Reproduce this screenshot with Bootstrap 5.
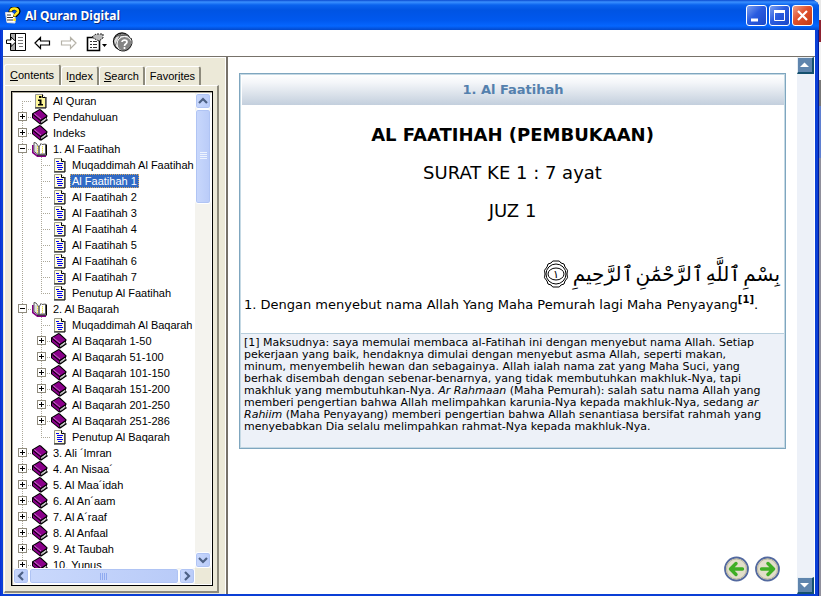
<!DOCTYPE html>
<html lang="id">
<head>
<meta charset="utf-8">
<meta name="viewport" content="width=device-width, initial-scale=1">
<title>Al Quran Digital</title>
<link href="https://cdn.jsdelivr.net/npm/bootstrap@5.3.0/dist/css/bootstrap.min.css" rel="stylesheet">
<style>
body{font:11px/16px "Liberation Sans",Arial,sans-serif;color:#000;background:linear-gradient(#e8e8e8 0 20px,#8c2030 20px 42px,#f2f2f2 42px 80px,#777 80px 106px,#5f7fd0 106px 158px,#90909c 158px)}
a{color:inherit;text-decoration:none}
button{padding:0;border:0;background:none;line-height:0}
button svg{display:block}
.app-window{margin-right:2px;background:#0a3fd6;padding:0 4px 2px 3px;border-radius:0 8px 0 0;box-shadow:inset -1px 0 #001c9c,inset 1px 0 #0831d9}
.title-bar{height:30px;margin:0 -4px 0 -3px;padding:2px 6px 0 4px;border-radius:0 7px 0 0;background:linear-gradient(#0a4ad0 0,#3a90ff 2px,#0a63ee 5px,#0054e3 10px,#0058ee 20px,#0566ff 26px,#0249cc 30px)}
.title-text{font:bold 12px/16px "Noto Sans","Open Sans",sans-serif;color:#fff;text-shadow:1px 1px #0a2a80}
.win-btn{width:21px;height:21px;border:1px solid #fff;border-radius:3px;background:linear-gradient(135deg,#7b9ff0,#2a5ce0 45%,#1b48c8)}
.win-close{background:linear-gradient(135deg,#f0a088,#e0502c 45%,#c43a14)}
.tool-bar{height:27px;padding-left:3px;border-bottom:1px solid #77726a}
.side-pane{width:222px;background:#ece9d8;padding:6px 0 1px 1px;border-top:1px solid #fff}
.tab-strip button{height:19px;font:11px/18px "Liberation Sans",Arial,sans-serif;padding:0 4px;border:1px solid #fff;border-right:2px solid #8d8a7c;border-bottom:0;border-radius:3px 3px 0 0}
.tab-strip button.active{height:21px;padding:0 5px;background:#ece9d8}
.tab-page{margin-right:6px;border:1px solid #fff;border-right:2px solid #8d8a7c;border-bottom:2px solid #8d8a7c;padding:5px 4px 5px 6px}
.tree-frame{min-width:0;border:1px solid #000;background:#fff;box-shadow:inset 1px 1px #aca899;padding:1px}
.tree-row{height:16px;white-space:nowrap}
.tree-row a{padding:0 2px;line-height:14px;margin-left:3px}
.tree-row a.chosen{background:#316ac5;color:#fff;outline:1px dotted #d8a860;outline-offset:-1px}
.guide{width:19px;height:16px;flex:none;background-repeat:no-repeat;--dots:repeating-linear-gradient(#aca899 0 1px,transparent 1px 2px);--dash:repeating-linear-gradient(90deg,#aca899 0 1px,transparent 1px 2px)}
.g-v{background-image:var(--dots);background-size:1px 16px;background-position:9px 0}
.g-t{background-image:var(--dots),var(--dash);background-size:1px 16px,10px 1px;background-position:9px 0,9px 8px}
.g-first{background-size:1px 8px,10px 1px;background-position:9px 8px,9px 8px}
.g-last{background-size:1px 8px,10px 1px}
.toggle{width:9px;height:9px;margin-right:1px;border:1px solid #8f8b7d;background:linear-gradient(#000,#000) center/5px 1px no-repeat #fff}
.toggle.plus{background:linear-gradient(#000,#000) center/5px 1px no-repeat,linear-gradient(#000,#000) center/1px 5px no-repeat #fff}
.ico{width:16px;height:16px;flex:none}
.scroll-v{width:16px;background:#f4f3ee}
.scroll-h{height:16px;background:#f4f3ee}
.xp-part{border:1px solid #fff;border-radius:3px;background:linear-gradient(90deg,#c9d8fc,#b9cbf8);box-shadow:inset 0 0 0 1px #b0c4f4}
.xp-arrow{width:16px;height:16px}
.xp-thumb-v{height:95px}
.splitter{width:3px;background:#fff;border-right:2px solid #77726a}
.doc-pane{padding:16px 11px 12px 11px}
.surah{border:1px solid #7fa6bf;box-shadow:inset 0 0 0 1px #c5d9e4}
.surah-head{height:30px;margin:1px 1px 0 2px;background:linear-gradient(#fff,#f4f6f9 25%,#c3cfdd);color:#5480ad;font:bold 13px/30px "DejaVu Sans",Verdana,sans-serif}
.verdana{font-family:"DejaVu Sans",Verdana,sans-serif}
.surah h1{font-size:18px;font-weight:bold;line-height:20px;margin:20px 0 0}
.surah-sub{font-size:18px;line-height:20px;margin:18px 0 0}
.arabic{font-family:"DejaVu Sans",sans-serif;font-size:20px;line-height:40px;margin:33px 5px 0}
.medal{width:26px;height:30px}
.verse{font-size:13px;line-height:16px;padding:3px 4px 20px;margin:0}
.verse sup{font-size:10px;font-weight:bold;top:-6px}
.note{font-size:11px;line-height:12px;background:#edf1f8;border-top:1px solid #b9cfdd;margin:0 1px 1px;padding:3px 3px 14px}
.page-scroll{width:17px;margin-right:1px;background:#edf1f8}
.page-scroll button{width:17px;height:17px;background:#5f85ad;border:2px solid;border-width:1px 2px 2px 1px;border-color:#e4ecf4 #14506e #14506e #e4ecf4}
.page-nav{gap:6px;margin-right:6px}
</style>
<script src="https://cdn.jsdelivr.net/npm/bootstrap@5.3.0/dist/js/bootstrap.bundle.min.js"></script>
</head>
<body class="vh-100 overflow-hidden">
<svg width="0" height="0" class="position-absolute" aria-hidden="true">
<symbol id="book" viewBox="0 0 16 16"><path d="M0 4.500 7.500 0 9 .5 15.500 6.500V7.500L15 8V10L16 11 9.500 15.500H8L0 9Z" fill="#000"/><path d="M1.200 5 7.800 1 14.500 7 8.500 11Z" fill="#8a008a"/><path d="M1 6 8.300 12V14.500L1 8.800Z" fill="#8a008a"/><path d="M9.300 12.200 14.300 8.800V10.500L9.300 14Z" fill="#fff"/><path d="M9.500 13.300 14.300 10" stroke="#888" stroke-width=".7"/><path d="M2.500 4.800 9 10" stroke="#e8b8e8" stroke-dasharray="1.500 1"/></symbol>
<symbol id="open" viewBox="0 0 16 16"><path d="M.8 4V11.500L5.500 15.200H14" fill="none" stroke="#840084" stroke-width="1.700"/><path d="M14.500 3.500V14.500M5 14H14" stroke="#000" fill="none"/><path d="M2 1.500 4 2 7 6V14L2 10.500ZM7 6 9 2.500 10 3.500 13.500 3V13H9L7 14Z" fill="#fff" stroke="#555"/><path d="M4 4V11" stroke="#bbb" /><path d="M5.500 5V12M10.500 5V12" stroke="#efe34c" stroke-dasharray="1.500 .5"/></symbol>
<symbol id="page" viewBox="0 0 16 16"><path d="M3.500 1.500H10.500L13.500 4.500V14.500H3.500Z" fill="#fffde0" stroke="#9a9a8a"/><path d="M14 4V15H3" fill="none" stroke="#000"/><path d="M10.500 1.500V4.500H13.500" fill="#fff" stroke="#000"/><path d="M5 4.500H8M6 6.500H12M6 8.500H11M6 10.500H12M7 12.500H11" stroke="#0000f0"/></symbol>
<symbol id="info" viewBox="0 0 16 16"><path d="M3.500 1.500H10.500L13.500 4.500V14.500H3.500Z" fill="#fff89a" stroke="#999"/><path d="M14 4V15H3" fill="none" stroke="#000"/><path d="M10.500 1.500V4.500H13.500" fill="#fff" stroke="#000"/><path d="M7 3H9.500V5H7ZM6 6.500H9.500V11H11V12.500H6V11H7.500V8H6Z" fill="#000"/></symbol>
</svg>
<div class="app-window d-flex flex-column vh-100">
<header class="title-bar d-flex align-items-center">
<svg width="17" height="17" viewBox="0 0 17 17"><path d="M1.500 5.500H8L11 8V16L3 15.500Z" fill="#fff" stroke="#ddd"/><path d="M3 8H7M3 10.500H9M3 13H9" stroke="#333"/><path d="M6.500 5C6 0 15 0 14.500 4.500 14.300 7 11 7 11 10" fill="none" stroke="#000" stroke-width="4"/><path d="M6.500 4.500C6.500 0 14.500 1 14 4.500 13.500 7 10.500 7 10.500 9.500M10.500 11.500V14" fill="none" stroke="#ffe620" stroke-width="2.600"/></svg>
<span class="title-text ms-1 flex-fill">Al Quran Digital</span>
<div class="d-flex" style="gap:2px">
<button class="win-btn" aria-label="Minimize"><svg width="19" height="19"><path d="M4 14H11" stroke="#fff" stroke-width="3"/></svg></button>
<button class="win-btn" aria-label="Maximize"><svg width="19" height="19"><path d="M4.500 5V14.500H14.500V5" fill="none" stroke="#fff"/><path d="M4 5.500H15" stroke="#fff" stroke-width="3"/></svg></button>
<button class="win-btn win-close" aria-label="Close"><svg width="19" height="19"><path d="M5 5 14 14M14 5 5 14" stroke="#fff" stroke-width="2.200"/></svg></button>
</div>
</header>
<div class="tool-bar d-flex align-items-center bg-white">
<button aria-label="Hide" class="me-2"><svg width="20" height="19" viewBox="0 0 20 19"><path d="M4.500 .5H19.500V17.500H4.500Z" fill="#fff" stroke="#000"/><path d="M5 1H9V17H5Z" fill="#aaa"/><path d="M9.500 1V17" stroke="#000"/><path d="M12 4.500H17M12 7.500H17M12 10.500H17M13 13.500H17" stroke="#777"/><path d="M.5 7V10.500H5V13.500L10 8.700 5 4V7Z" fill="#fff" stroke="#000"/></svg></button>
<button aria-label="Back" class="me-2"><svg width="18" height="16" viewBox="1 0 18 16"><path d="M2 8 7.500 2.500V6H16.500V10H7.500V13.500Z" fill="#fff" stroke="#000" stroke-width="1.200"/></svg></button>
<button aria-label="Forward" class="me-2"><svg width="18" height="16" viewBox="0 0 18 16"><path d="M16 8 10.500 2.500V6H1.500V10H10.500V13.500Z" fill="#fff" stroke="#b5b2a8" stroke-width="1.200"/></svg></button>
<button aria-label="Options" class="me-1"><svg width="22" height="20" viewBox="0 0 22 20"><path d="M1.500 4.500H13.500V17.500H1.500Z" fill="#fff" stroke="#000" stroke-width="1.600"/><path d="M4 8.500H6M7 8.500H11M4 11.500H6M7 11.500H11M4 14.500H6M7 14.500H11" stroke="#333"/><path d="M6 4 10 1H17V5L13 8 9 6Z" fill="#bbb" stroke="#222" stroke-dasharray="2 1"/><path d="M16 11H21L18.500 14Z" fill="#000"/></svg></button>
<button aria-label="Web Help"><svg width="22" height="21" viewBox="0 0 22 21"><circle cx="10" cy="9.500" r="8.500" fill="#ddd" stroke="#111" stroke-width="1.300"/><path d="M2 8C5 1 14 0 18 6M4 4 16 3M3 14 8 4" stroke="#555" fill="none"/><circle cx="12.500" cy="12" r="7.500" fill="#858585" stroke="#fff"/><path d="M19 6A9 9 0 0 1 7 18" fill="none" stroke="#222"/><path d="M10 10C10 7.500 15 7.500 15 10 15 12 12.500 11.500 12.500 14M12.500 15V17" fill="none" stroke="#fff" stroke-width="1.700"/></svg></button>
</div>
<main class="d-flex flex-fill bg-white" style="min-height:0">
<aside class="side-pane d-flex flex-column flex-shrink-0">
<div class="tab-strip d-flex align-items-end" role="tablist">
<button role="tab" class="active" aria-selected="true"><u>C</u>ontents</button>
<button role="tab">I<u>n</u>dex</button>
<button role="tab"><u>S</u>earch</button>
<button role="tab">Favor<u>i</u>tes</button>
</div>
<div class="tab-page flex-fill d-flex" style="min-height:0">
<div class="tree-frame flex-fill d-flex flex-column">
<div class="d-flex flex-fill" style="min-height:0">
<nav class="flex-fill overflow-hidden" aria-label="Contents" id="tree">
<div class="tree-row d-flex align-items-center"><span class="guide g-t g-first"></span><svg class="ico"><use href="#info"/></svg><a href="#">Al Quran</a></div>
<div class="tree-row d-flex align-items-center"><span class="guide g-t d-flex align-items-center justify-content-center"><button class="toggle plus" aria-label="Expand"></button></span><svg class="ico"><use href="#book"/></svg><a href="#">Pendahuluan</a></div>
<div class="tree-row d-flex align-items-center"><span class="guide g-t d-flex align-items-center justify-content-center"><button class="toggle plus" aria-label="Expand"></button></span><svg class="ico"><use href="#book"/></svg><a href="#">Indeks</a></div>
<div class="tree-row d-flex align-items-center"><span class="guide g-t d-flex align-items-center justify-content-center"><button class="toggle" aria-label="Collapse"></button></span><svg class="ico"><use href="#open"/></svg><a href="#">1. Al Faatihah</a></div>
<div class="tree-row d-flex align-items-center"><span class="guide g-v"></span><span class="guide g-t"></span><svg class="ico"><use href="#page"/></svg><a href="#">Muqaddimah Al Faatihah</a></div>
<div class="tree-row d-flex align-items-center"><span class="guide g-v"></span><span class="guide g-t"></span><svg class="ico"><use href="#page"/></svg><a href="#" class="chosen">Al Faatihah 1</a></div>
<div class="tree-row d-flex align-items-center"><span class="guide g-v"></span><span class="guide g-t"></span><svg class="ico"><use href="#page"/></svg><a href="#">Al Faatihah 2</a></div>
<div class="tree-row d-flex align-items-center"><span class="guide g-v"></span><span class="guide g-t"></span><svg class="ico"><use href="#page"/></svg><a href="#">Al Faatihah 3</a></div>
<div class="tree-row d-flex align-items-center"><span class="guide g-v"></span><span class="guide g-t"></span><svg class="ico"><use href="#page"/></svg><a href="#">Al Faatihah 4</a></div>
<div class="tree-row d-flex align-items-center"><span class="guide g-v"></span><span class="guide g-t"></span><svg class="ico"><use href="#page"/></svg><a href="#">Al Faatihah 5</a></div>
<div class="tree-row d-flex align-items-center"><span class="guide g-v"></span><span class="guide g-t"></span><svg class="ico"><use href="#page"/></svg><a href="#">Al Faatihah 6</a></div>
<div class="tree-row d-flex align-items-center"><span class="guide g-v"></span><span class="guide g-t"></span><svg class="ico"><use href="#page"/></svg><a href="#">Al Faatihah 7</a></div>
<div class="tree-row d-flex align-items-center"><span class="guide g-v"></span><span class="guide g-t g-last"></span><svg class="ico"><use href="#page"/></svg><a href="#">Penutup Al Faatihah</a></div>
<div class="tree-row d-flex align-items-center"><span class="guide g-t d-flex align-items-center justify-content-center"><button class="toggle" aria-label="Collapse"></button></span><svg class="ico"><use href="#open"/></svg><a href="#">2. Al Baqarah</a></div>
<div class="tree-row d-flex align-items-center"><span class="guide g-v"></span><span class="guide g-t"></span><svg class="ico"><use href="#page"/></svg><a href="#">Muqaddimah Al Baqarah</a></div>
<div class="tree-row d-flex align-items-center"><span class="guide g-v"></span><span class="guide g-t d-flex align-items-center justify-content-center"><button class="toggle plus" aria-label="Expand"></button></span><svg class="ico"><use href="#book"/></svg><a href="#">Al Baqarah 1-50</a></div>
<div class="tree-row d-flex align-items-center"><span class="guide g-v"></span><span class="guide g-t d-flex align-items-center justify-content-center"><button class="toggle plus" aria-label="Expand"></button></span><svg class="ico"><use href="#book"/></svg><a href="#">Al Baqarah 51-100</a></div>
<div class="tree-row d-flex align-items-center"><span class="guide g-v"></span><span class="guide g-t d-flex align-items-center justify-content-center"><button class="toggle plus" aria-label="Expand"></button></span><svg class="ico"><use href="#book"/></svg><a href="#">Al Baqarah 101-150</a></div>
<div class="tree-row d-flex align-items-center"><span class="guide g-v"></span><span class="guide g-t d-flex align-items-center justify-content-center"><button class="toggle plus" aria-label="Expand"></button></span><svg class="ico"><use href="#book"/></svg><a href="#">Al Baqarah 151-200</a></div>
<div class="tree-row d-flex align-items-center"><span class="guide g-v"></span><span class="guide g-t d-flex align-items-center justify-content-center"><button class="toggle plus" aria-label="Expand"></button></span><svg class="ico"><use href="#book"/></svg><a href="#">Al Baqarah 201-250</a></div>
<div class="tree-row d-flex align-items-center"><span class="guide g-v"></span><span class="guide g-t d-flex align-items-center justify-content-center"><button class="toggle plus" aria-label="Expand"></button></span><svg class="ico"><use href="#book"/></svg><a href="#">Al Baqarah 251-286</a></div>
<div class="tree-row d-flex align-items-center"><span class="guide g-v"></span><span class="guide g-t g-last"></span><svg class="ico"><use href="#page"/></svg><a href="#">Penutup Al Baqarah</a></div>
<div class="tree-row d-flex align-items-center"><span class="guide g-t d-flex align-items-center justify-content-center"><button class="toggle plus" aria-label="Expand"></button></span><svg class="ico"><use href="#book"/></svg><a href="#">3. Ali ´Imran</a></div>
<div class="tree-row d-flex align-items-center"><span class="guide g-t d-flex align-items-center justify-content-center"><button class="toggle plus" aria-label="Expand"></button></span><svg class="ico"><use href="#book"/></svg><a href="#">4. An Nisaa´</a></div>
<div class="tree-row d-flex align-items-center"><span class="guide g-t d-flex align-items-center justify-content-center"><button class="toggle plus" aria-label="Expand"></button></span><svg class="ico"><use href="#book"/></svg><a href="#">5. Al Maa´idah</a></div>
<div class="tree-row d-flex align-items-center"><span class="guide g-t d-flex align-items-center justify-content-center"><button class="toggle plus" aria-label="Expand"></button></span><svg class="ico"><use href="#book"/></svg><a href="#">6. Al An´aam</a></div>
<div class="tree-row d-flex align-items-center"><span class="guide g-t d-flex align-items-center justify-content-center"><button class="toggle plus" aria-label="Expand"></button></span><svg class="ico"><use href="#book"/></svg><a href="#">7. Al A´raaf</a></div>
<div class="tree-row d-flex align-items-center"><span class="guide g-t d-flex align-items-center justify-content-center"><button class="toggle plus" aria-label="Expand"></button></span><svg class="ico"><use href="#book"/></svg><a href="#">8. Al Anfaal</a></div>
<div class="tree-row d-flex align-items-center"><span class="guide g-t d-flex align-items-center justify-content-center"><button class="toggle plus" aria-label="Expand"></button></span><svg class="ico"><use href="#book"/></svg><a href="#">9. At Taubah</a></div>
<div class="tree-row d-flex align-items-center"><span class="guide g-t d-flex align-items-center justify-content-center"><button class="toggle plus" aria-label="Expand"></button></span><svg class="ico"><use href="#book"/></svg><a href="#">10. Yunus</a></div>
</nav>
<div class="scroll-v d-flex flex-column flex-shrink-0">
<button class="xp-part xp-arrow" aria-label="Scroll up"><svg width="14" height="14"><path d="M3 9 7 5 11 9" fill="none" stroke="#4d6185" stroke-width="2.200"/></svg></button>
<div class="xp-part xp-thumb-v d-flex align-items-center justify-content-center"><svg width="7" height="8"><path d="M0 .5H7M0 2.500H7M0 4.500H7M0 6.500H7" stroke="#eef4fe"/></svg></div>
<button class="xp-part xp-arrow mt-auto" aria-label="Scroll down"><svg width="14" height="14"><path d="M3 5 7 9 11 5" fill="none" stroke="#4d6185" stroke-width="2.200"/></svg></button>
</div>
</div>
<div class="d-flex" style="background:#ece9d8">
<div class="scroll-h d-flex flex-fill">
<button class="xp-part xp-arrow" aria-label="Scroll left"><svg width="14" height="14"><path d="M9 3 5 7 9 11" fill="none" stroke="#4d6185" stroke-width="2.200"/></svg></button>
<div class="xp-part d-flex align-items-center justify-content-center flex-fill"><svg width="8" height="7"><path d="M.5 0V7M2.500 0V7M4.500 0V7M6.500 0V7" stroke="#8faaf0"/></svg></div>
<button class="xp-part xp-arrow" aria-label="Scroll right"><svg width="14" height="14"><path d="M5 3 9 7 5 11" fill="none" stroke="#4d6185" stroke-width="2.200"/></svg></button>
</div>
<div class="xp-arrow"></div>
</div>
</div>
</div>
</aside>
<div class="splitter flex-shrink-0"></div>
<section class="doc-pane verdana flex-fill d-flex flex-column">
<article class="surah">
<div class="surah-head text-center">1. Al Faatihah</div>
<h1 class="text-center">AL FAATIHAH (PEMBUKAAN)</h1>
<p class="surah-sub text-center">SURAT KE 1 : 7 ayat</p>
<p class="surah-sub text-center">JUZ 1</p>
<div class="arabic d-flex align-items-center" dir="rtl" lang="ar"><span class="text-nowrap">بِسْمِ&#x200A;ٱللَّهِ&#x200A;ٱلرَّحْمَٰنِ&#x200A;ٱلرَّحِيمِ</span>
<svg class="medal me-1" viewBox="0 0 26 30"><g fill="none" stroke="#000"><path d="M13 2Q17 1 18 4 22 4 22 8 26 11 24 15 26 19 22 22 22 26 18 26 17 29 13 28 9 29 8 26 4 26 4 22 0 19 2 15 0 11 4 8 4 4 8 4 9 1 13 2Z"/><circle cx="13" cy="15" r="10"/><ellipse cx="13" cy="15" rx="8" ry="6"/></g><text x="13" y="19" font-size="11" text-anchor="middle">١</text></svg></div>
<p class="verse">1. Dengan menyebut nama Allah Yang Maha Pemurah lagi Maha Penyayang<sup>[1]</sup>.</p>
<div class="note">[1] Maksudnya: saya memulai membaca al-Fatihah ini dengan menyebut nama Allah. Setiap<br>pekerjaan yang baik, hendaknya dimulai dengan menyebut asma Allah, seperti makan,<br>minum, menyembelih hewan dan sebagainya. Allah ialah nama zat yang Maha Suci, yang<br>berhak disembah dengan sebenar-benarnya, yang tidak membutuhkan makhluk-Nya, tapi<br>makhluk yang membutuhkan-Nya. <i>Ar Rahmaan</i> (Maha Pemurah): salah satu nama Allah yang<br>memberi pengertian bahwa Allah melimpahkan karunia-Nya kepada makhluk-Nya, sedang <i>ar<br>Rahiim</i> (Maha Penyayang) memberi pengertian bahwa Allah senantiasa bersifat rahmah yang<br>menyebabkan Dia selalu melimpahkan rahmat-Nya kepada makhluk-Nya.</div>
</article>
<div class="page-nav mt-auto d-flex justify-content-end">
<button aria-label="Previous"><svg width="25" height="26" viewBox="0 0 25 26"><circle cx="12.500" cy="13" r="11.500" fill="#e2dfca" stroke="#53699f" stroke-width="1.800"/><circle cx="12.500" cy="13" r="10" fill="none" stroke="#bcb8a2"/><path d="M18.500 13H7M12 7.500 6.500 13 12 18.500" fill="none" stroke="#3fae25" stroke-width="3.400" stroke-linecap="round" stroke-linejoin="round"/></svg></button>
<button aria-label="Next"><svg width="25" height="26" viewBox="0 0 25 26"><circle cx="12.500" cy="13" r="11.500" fill="#e2dfca" stroke="#53699f" stroke-width="1.800"/><circle cx="12.500" cy="13" r="10" fill="none" stroke="#bcb8a2"/><path d="M6.500 13H18M13 7.500 18.500 13 13 18.500" fill="none" stroke="#3fae25" stroke-width="3.400" stroke-linecap="round" stroke-linejoin="round"/></svg></button>
</div>
</section>
<div class="page-scroll d-flex flex-column justify-content-between flex-shrink-0">
<button aria-label="Page up"><svg width="14" height="14"><path d="M2 9H11L6.500 4.500Z" fill="#fff"/></svg></button>
<button aria-label="Page down"><svg width="14" height="14"><path d="M2 5H11L6.500 9.500Z" fill="#fff"/></svg></button>
</div>
</main>
</div>
</body>
</html>
